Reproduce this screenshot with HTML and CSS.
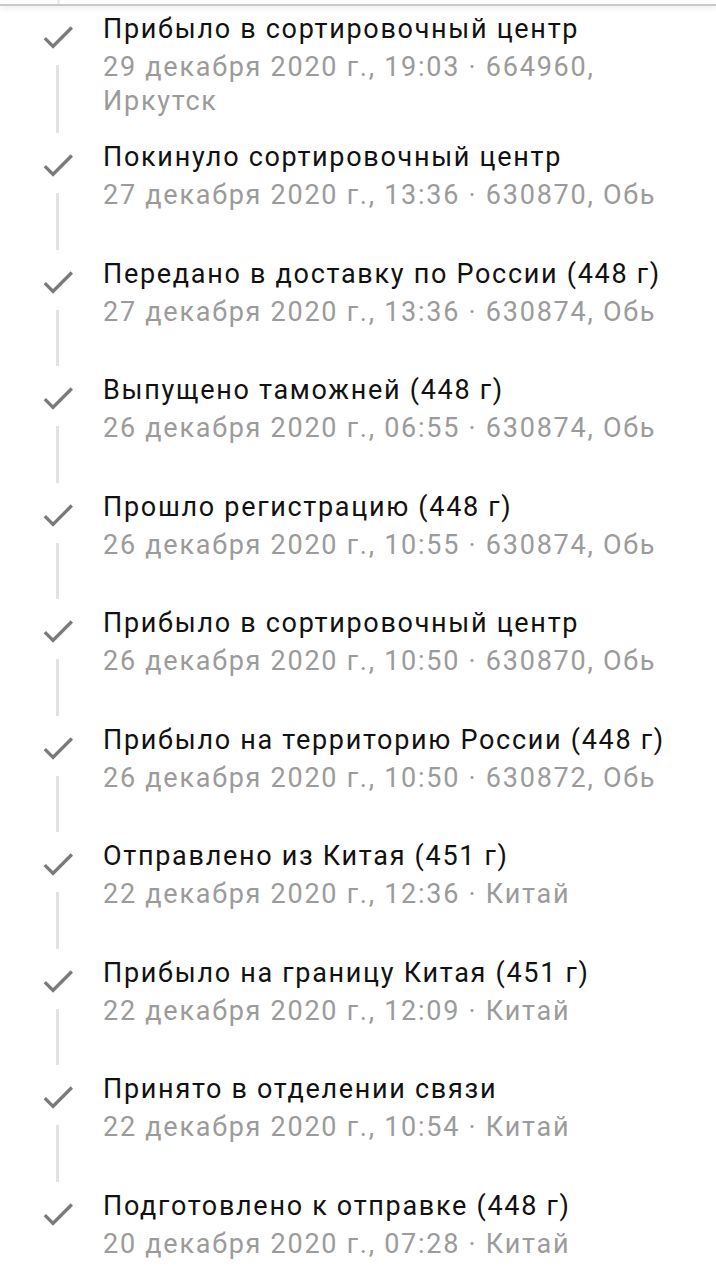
FILE: index.html
```html
<!DOCTYPE html>
<html lang="ru">
<head>
<meta charset="utf-8">
<link rel="stylesheet" href="styles.css">
</head>
<body>
<div class="screen">
  <div class="topbar"><span class="stub"></span></div>
  <ul class="timeline">
    <li class="item">
      <div class="rail"><svg class="check" viewBox="0 0 24 24"><path d="M9 16.2L4.8 12l-1.4 1.4L9 19 21 7l-1.4-1.4L9 16.2z"/></svg><span class="line"></span></div>
      <div class="text"><div class="title">Прибыло в сортировочный центр</div><div class="meta">29 декабря 2020 г., 19:03 · 664960, Иркутск</div></div>
    </li>
    <li class="item">
      <div class="rail"><svg class="check" viewBox="0 0 24 24"><path d="M9 16.2L4.8 12l-1.4 1.4L9 19 21 7l-1.4-1.4L9 16.2z"/></svg><span class="line"></span></div>
      <div class="text"><div class="title">Покинуло сортировочный центр</div><div class="meta">27 декабря 2020 г., 13:36 · 630870, Обь</div></div>
    </li>
    <li class="item">
      <div class="rail"><svg class="check" viewBox="0 0 24 24"><path d="M9 16.2L4.8 12l-1.4 1.4L9 19 21 7l-1.4-1.4L9 16.2z"/></svg><span class="line"></span></div>
      <div class="text"><div class="title">Передано в доставку по России (448 г)</div><div class="meta">27 декабря 2020 г., 13:36 · 630874, Обь</div></div>
    </li>
    <li class="item">
      <div class="rail"><svg class="check" viewBox="0 0 24 24"><path d="M9 16.2L4.8 12l-1.4 1.4L9 19 21 7l-1.4-1.4L9 16.2z"/></svg><span class="line"></span></div>
      <div class="text"><div class="title">Выпущено таможней (448 г)</div><div class="meta">26 декабря 2020 г., 06:55 · 630874, Обь</div></div>
    </li>
    <li class="item">
      <div class="rail"><svg class="check" viewBox="0 0 24 24"><path d="M9 16.2L4.8 12l-1.4 1.4L9 19 21 7l-1.4-1.4L9 16.2z"/></svg><span class="line"></span></div>
      <div class="text"><div class="title">Прошло регистрацию (448 г)</div><div class="meta">26 декабря 2020 г., 10:55 · 630874, Обь</div></div>
    </li>
    <li class="item">
      <div class="rail"><svg class="check" viewBox="0 0 24 24"><path d="M9 16.2L4.8 12l-1.4 1.4L9 19 21 7l-1.4-1.4L9 16.2z"/></svg><span class="line"></span></div>
      <div class="text"><div class="title">Прибыло в сортировочный центр</div><div class="meta">26 декабря 2020 г., 10:50 · 630870, Обь</div></div>
    </li>
    <li class="item">
      <div class="rail"><svg class="check" viewBox="0 0 24 24"><path d="M9 16.2L4.8 12l-1.4 1.4L9 19 21 7l-1.4-1.4L9 16.2z"/></svg><span class="line"></span></div>
      <div class="text"><div class="title">Прибыло на территорию России (448 г)</div><div class="meta">26 декабря 2020 г., 10:50 · 630872, Обь</div></div>
    </li>
    <li class="item">
      <div class="rail"><svg class="check" viewBox="0 0 24 24"><path d="M9 16.2L4.8 12l-1.4 1.4L9 19 21 7l-1.4-1.4L9 16.2z"/></svg><span class="line"></span></div>
      <div class="text"><div class="title">Отправлено из Китая (451 г)</div><div class="meta">22 декабря 2020 г., 12:36 · Китай</div></div>
    </li>
    <li class="item">
      <div class="rail"><svg class="check" viewBox="0 0 24 24"><path d="M9 16.2L4.8 12l-1.4 1.4L9 19 21 7l-1.4-1.4L9 16.2z"/></svg><span class="line"></span></div>
      <div class="text"><div class="title">Прибыло на границу Китая (451 г)</div><div class="meta">22 декабря 2020 г., 12:09 · Китай</div></div>
    </li>
    <li class="item">
      <div class="rail"><svg class="check" viewBox="0 0 24 24"><path d="M9 16.2L4.8 12l-1.4 1.4L9 19 21 7l-1.4-1.4L9 16.2z"/></svg><span class="line"></span></div>
      <div class="text"><div class="title">Принято в отделении связи</div><div class="meta">22 декабря 2020 г., 10:54 · Китай</div></div>
    </li>
    <li class="item last">
      <div class="rail"><svg class="check" viewBox="0 0 24 24"><path d="M9 16.2L4.8 12l-1.4 1.4L9 19 21 7l-1.4-1.4L9 16.2z"/></svg><span class="line"></span></div>
      <div class="text"><div class="title">Подготовлено к отправке (448 г)</div><div class="meta">20 декабря 2020 г., 07:28 · Китай</div></div>
    </li>
  </ul>
</div>
</body>
</html>
```

FILE: styles.css
```css
html, body {
  margin: 0;
  padding: 0;
  background: #ffffff;
}

.screen {
  width: 716px;
  height: 1280px;
  overflow: hidden;
  font-family: Roboto, "Noto Sans", sans-serif;
  background: #ffffff;
}

.topbar {
  height: 4px;
  border-bottom: 2px solid #c9c9c9;
  box-shadow: 0 2px 6px rgba(0, 0, 0, 0.08);
  padding-left: 57px;
  position: relative;
  z-index: 1;
}

.stub {
  display: block;
  width: 3px;
  height: 4px;
  background: #ececec;
}

.timeline {
  list-style: none;
  margin: 4px 0 0;
  padding: 0;
}

.item {
  display: flex;
  min-height: 116.56px;
  box-sizing: border-box;
}

.rail {
  width: 103px;
  flex: none;
  display: flex;
  flex-direction: column;
  align-items: flex-start;
  padding-left: 38px;
  box-sizing: border-box;
}

.check {
  width: 40px;
  height: 40px;
  margin-top: 7px;
  fill: #7a7a7a;
  flex: none;
}

.line {
  display: block;
  width: 3px;
  flex: 1;
  margin: 8px 0 5px 18px;
  background: #e2e2e2;
}

.last .line {
  visibility: hidden;
}

.text {
  flex: 1;
  padding-right: 8px;
  padding-bottom: 20px;
}

.title {
  font-size: 27px;
  line-height: 38px;
  letter-spacing: 1.7px;
  color: #111111;
  margin-bottom: 2px;
}

.meta {
  font-size: 27px;
  line-height: 34px;
  letter-spacing: 1.75px;
  color: #9b9b9b;
}
```
